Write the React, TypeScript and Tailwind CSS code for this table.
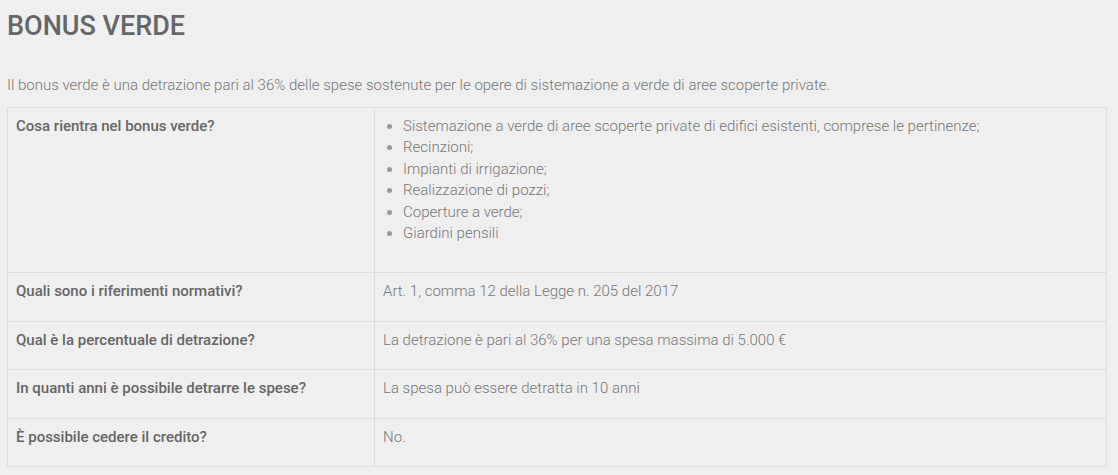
import type { FC } from 'react';

// -----------------------------------------------------------------------------
// Data
// -----------------------------------------------------------------------------

const LIST_ITEMS = [
  'Sistemazione a verde di aree scoperte private di edifici esistenti, comprese le pertinenze;',
  'Recinzioni;',
  'Impianti di irrigazione;',
  'Realizzazione di pozzi;',
  'Coperture a verde;',
  'Giardini pensili',
];

const ROWS = [
  { q: 'Quali sono i riferimenti normativi?', a: 'Art. 1, comma 12 della Legge n. 205 del 2017' },
  {
    q: 'Qual è la percentuale di detrazione?',
    a: 'La detrazione è pari al 36% per una spesa massima di 5.000 €',
  },
  { q: 'In quanti anni è possibile detrarre le spese?', a: 'La spesa può essere detratta in 10 anni' },
  { q: 'È possibile cedere il credito?', a: 'No.' },
];

// -----------------------------------------------------------------------------
// Component
// -----------------------------------------------------------------------------

const App: FC = () => {
  return (
    <div className="min-h-[475px] w-full bg-[#efefef] pl-[7px] pr-[11px] pt-[9px] font-['Roboto',sans-serif]">
      <h1 className="text-[27px] font-medium leading-[34px] text-[#666666]">BONUS VERDE</h1>

      <p className="mt-[32px] text-[15px] font-light leading-[21px] text-[#777777]">
        Il bonus verde è una detrazione pari al 36% delle spese sostenute per le opere di sistemazione a
        verde di aree scoperte private.
      </p>

      <table className="mt-[11px] w-[1100px] border-collapse text-[15px] leading-[21.4px]">
        <tbody>
          <tr>
            <td className="w-[367px] border border-[#dddddd] px-[8px] pb-[28px] pt-[8px] align-top font-medium text-[#666666]">
              Cosa rientra nel bonus verde?
            </td>
            <td className="border border-[#dddddd] px-[8px] pb-[28px] pt-[8px] align-top font-light text-[#777777]">
              <ul className="list-disc pl-[20px] marker:text-[#999999]">
                {LIST_ITEMS.map((item) => (
                  <li key={item}>{item}</li>
                ))}
              </ul>
            </td>
          </tr>
          {ROWS.map(({ q, a }) => (
            <tr key={q}>
              <td className="border border-[#dddddd] px-[8px] pb-[18px] pt-[8px] align-top font-medium text-[#666666]">
                {q}
              </td>
              <td className="border border-[#dddddd] px-[8px] pb-[18px] pt-[8px] align-top font-light text-[#777777]">
                {a}
              </td>
            </tr>
          ))}
        </tbody>
      </table>
    </div>
  );
};

export default App;
